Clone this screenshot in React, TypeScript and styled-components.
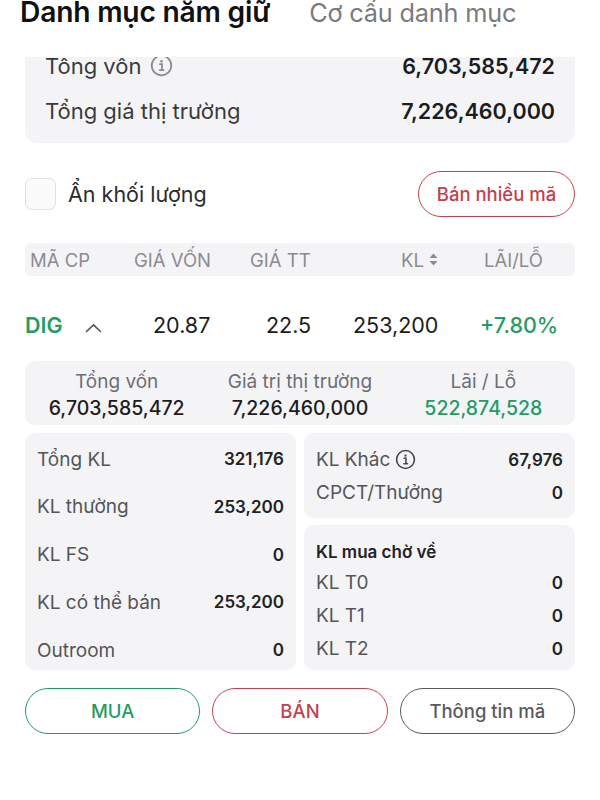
import React, { useLayoutEffect, useRef } from "react";
import styled, { createGlobalStyle } from "styled-components";

const GREEN = "#1f9d62";
const RED = "#c4404d";
const CARD = "#f4f4f7";
const DARK = "#1c1c1e";

const Global = createGlobalStyle`
  html, body { margin: 0; padding: 0; background: #fff; }
  body { font-family: Inter, "Noto Sans", "Liberation Sans", sans-serif; color: ${DARK}; }
  * { box-sizing: border-box; }
`;

const Page = styled.div`
  width: 600px;
  height: 800px;
  display: flex;
  flex-direction: column;
  overflow: hidden;
  background: #fff;
`;

const Header = styled.div`
  height: 57px;
  flex: none;
  display: flex;
  align-items: baseline;
  gap: 39px;
  padding: 0 20px;
  background: #fff;
`;

const Tab = styled.div<{ $active?: boolean }>`
  font-size: ${(p) => (p.$active ? "28.2px" : "25.3px")};
  line-height: 25px;
  font-weight: ${(p) => (p.$active ? 600 : 400)};
  color: ${(p) => (p.$active ? "#111" : "#7a7a7e")};
  letter-spacing: -0.2px;
`;

const Viewport = styled.div`
  flex: 1;
  overflow-y: auto;
  scrollbar-width: none;
  &::-webkit-scrollbar { display: none; }
`;

const Content = styled.div`
  padding: 0 25px 120px;
  display: flex;
  flex-direction: column;
`;

const SummaryCard = styled.div`
  background: ${CARD};
  border-radius: 12px;
  padding: 0 20px 10px;
`;

const SummaryRow = styled.div`
  height: 45px;
  display: flex;
  align-items: center;
  justify-content: space-between;
  font-size: 22px;
`;

const SummaryLabel = styled.span`
  display: flex;
  align-items: center;
  gap: 9px;
  color: #3a3a3c;
`;

const SummaryValue = styled.span`
  font-size: 21.5px;
  font-weight: 600;
  color: ${DARK};
`;

const ToolRow = styled.div`
  margin-top: 28px;
  height: 46px;
  display: flex;
  align-items: center;
  justify-content: space-between;
`;

const CheckLabel = styled.label`
  display: flex;
  align-items: center;
  gap: 12px;
  font-size: 21.5px;
  color: #2c2c2e;
`;

const CheckBox = styled.span`
  width: 31px;
  height: 32px;
  border: 1px solid #e0e0e4;
  border-radius: 7px;
  background: #fbfbfc;
`;

const OutlineButton = styled.button<{ $color: string; $size?: number }>`
  height: 46px;
  border-radius: 23px;
  border: 1.5px solid ${(p) => p.$color};
  background: #fff;
  color: ${(p) => p.$color};
  font-family: inherit;
  font-size: ${(p) => p.$size ?? 18.5}px;
  font-weight: 500;
  padding: 0 16px;
  cursor: pointer;
`;

const TableHeader = styled.div`
  margin-top: 26px;
  height: 33px;
  background: ${CARD};
  border-radius: 6px;
  display: grid;
  grid-template-columns: 104px 116px 151px 83px 1fr;
  align-items: center;
  padding-left: 5px;
  font-size: 18.5px;
  color: #8b8b90;
`;

const HeadCell = styled.span`
  display: flex;
  align-items: center;
  gap: 5px;
`;

const StockRow = styled.div`
  margin-top: 28px;
  height: 42px;
  display: grid;
  grid-template-columns: 60px 68px 113px 87px 127px 1fr;
  align-items: center;
  font-size: 21.5px;
  color: ${DARK};
`;

const Ticker = styled.span`
  color: ${GREEN};
  font-weight: 600;
`;

const Change = styled.span`
  color: ${GREEN};
  font-weight: 500;
`;

const TotalsCard = styled.div`
  margin-top: 15px;
  background: ${CARD};
  border-radius: 10px;
  padding: 10px 0 6px;
  display: grid;
  grid-template-columns: 1fr 1fr 1fr;
`;

const TotalCol = styled.div`
  display: flex;
  flex-direction: column;
  align-items: center;
  gap: 4px;
`;

const TotalLabel = styled.span`
  font-size: 19px;
  line-height: 22px;
  color: #6e6e73;
`;

const TotalValue = styled.span<{ $green?: boolean }>`
  font-size: 19.5px;
  line-height: 22px;
  font-weight: 500;
  color: ${(p) => (p.$green ? GREEN : DARK)};
`;

const DetailGrid = styled.div`
  margin-top: 8px;
  display: grid;
  grid-template-columns: 1fr 1fr;
  gap: 8px;
`;

const Column = styled.div`
  display: flex;
  flex-direction: column;
  gap: 7px;
`;

const DetailCard = styled.div<{ $pad: string; $spread?: boolean; $grow?: boolean }>`
  background: ${CARD};
  border-radius: 10px;
  padding: ${(p) => p.$pad};
  display: flex;
  flex-direction: column;
  justify-content: ${(p) => (p.$spread ? "space-between" : "flex-start")};
  min-height: ${(p) => (p.$spread ? "237px" : "0")};
  flex: ${(p) => (p.$grow ? 1 : "none")};
`;

const DetailRow = styled.div<{ $h: number }>`
  height: ${(p) => p.$h}px;
  display: flex;
  align-items: center;
  justify-content: space-between;
`;

const DetailLabel = styled.span`
  display: flex;
  align-items: center;
  gap: 5px;
  font-size: 19px;
  color: #555558;
`;

const DetailValue = styled.span`
  font-size: 17px;
  font-weight: 600;
  color: #222;
`;

const CardTitle = styled.div`
  font-size: 17px;
  line-height: 22px;
  font-weight: 600;
  color: #222;
  margin-bottom: 3px;
`;

const ActionRow = styled.div`
  margin-top: 18px;
  display: grid;
  grid-template-columns: 1fr 1fr 1fr;
  gap: 12px;
`;

const InfoIcon = ({ size, color }: { size: number; color: string }) => (
  <svg width={size} height={size} viewBox="0 0 24 24" fill="none">
    <circle cx="12" cy="12" r="10.2" stroke={color} strokeWidth="1.8" />
    <circle cx="12" cy="7.6" r="1.3" fill={color} />
    <path d="M10.4 10.6h2.1v6.2M10.2 16.8h4" stroke={color} strokeWidth="1.8" strokeLinecap="round" />
  </svg>
);

const ChevronUp = () => (
  <svg width="17" height="10" viewBox="0 0 17 10" fill="none">
    <path d="M1.5 8.5 8.5 1.8l7 6.7" stroke="#555" strokeWidth="1.6" strokeLinecap="round" strokeLinejoin="round" />
  </svg>
);

const SortIcon = () => (
  <svg width="9" height="13" viewBox="0 0 9 13">
    <path d="M4.5 0.5 8.5 5H0.5z" fill="#8b8b90" />
    <path d="M4.5 12.5 0.5 8h8z" fill="#8b8b90" />
  </svg>
);

const SCROLL_OFFSET = 14;

export default function App() {
  const viewRef = useRef<HTMLDivElement>(null);
  useLayoutEffect(() => {
    if (viewRef.current) viewRef.current.scrollTop = SCROLL_OFFSET;
  }, []);

  return (
    <Page>
      <Global />
      <Header>
        <Tab $active>Danh mục nắm giữ</Tab>
        <Tab>Cơ cấu danh mục</Tab>
      </Header>
      <Viewport ref={viewRef}>
        <Content>
          <SummaryCard>
            <SummaryRow>
              <SummaryLabel>
                Tổng vốn <InfoIcon size={23} color="#8a8a8e" />
              </SummaryLabel>
              <SummaryValue>6,703,585,472</SummaryValue>
            </SummaryRow>
            <SummaryRow>
              <SummaryLabel>Tổng giá thị trường</SummaryLabel>
              <SummaryValue>7,226,460,000</SummaryValue>
            </SummaryRow>
          </SummaryCard>

          <ToolRow>
            <CheckLabel>
              <CheckBox />
              Ẩn khối lượng
            </CheckLabel>
            <OutlineButton $color={RED} style={{ width: 157 }}>
              Bán nhiều mã
            </OutlineButton>
          </ToolRow>

          <TableHeader>
            <HeadCell>MÃ CP</HeadCell>
            <HeadCell>GIÁ VỐN</HeadCell>
            <HeadCell>GIÁ TT</HeadCell>
            <HeadCell>
              KL <SortIcon />
            </HeadCell>
            <HeadCell>LÃI/LỖ</HeadCell>
          </TableHeader>

          <StockRow>
            <Ticker>DIG</Ticker>
            <span>
              <ChevronUp />
            </span>
            <span>20.87</span>
            <span>22.5</span>
            <span>253,200</span>
            <Change>+7.80%</Change>
          </StockRow>

          <TotalsCard>
            <TotalCol>
              <TotalLabel>Tổng vốn</TotalLabel>
              <TotalValue>6,703,585,472</TotalValue>
            </TotalCol>
            <TotalCol>
              <TotalLabel>Giá trị thị trường</TotalLabel>
              <TotalValue>7,226,460,000</TotalValue>
            </TotalCol>
            <TotalCol>
              <TotalLabel>Lãi / Lỗ</TotalLabel>
              <TotalValue $green>522,874,528</TotalValue>
            </TotalCol>
          </TotalsCard>

          <DetailGrid>
            <DetailCard $pad="14px 12px 8px 12px" $spread>
              <DetailRow $h={24}>
                <DetailLabel>Tổng KL</DetailLabel>
                <DetailValue>321,176</DetailValue>
              </DetailRow>
              <DetailRow $h={24}>
                <DetailLabel>KL thường</DetailLabel>
                <DetailValue>253,200</DetailValue>
              </DetailRow>
              <DetailRow $h={24}>
                <DetailLabel>KL FS</DetailLabel>
                <DetailValue>0</DetailValue>
              </DetailRow>
              <DetailRow $h={24}>
                <DetailLabel>KL có thể bán</DetailLabel>
                <DetailValue>253,200</DetailValue>
              </DetailRow>
              <DetailRow $h={24}>
                <DetailLabel>Outroom</DetailLabel>
                <DetailValue>0</DetailValue>
              </DetailRow>
            </DetailCard>
            <Column>
              <DetailCard $pad="10px 12px 9px 12px">
                <DetailRow $h={33}>
                  <DetailLabel>
                    KL Khác <InfoIcon size={21} color="#444" />
                  </DetailLabel>
                  <DetailValue>67,976</DetailValue>
                </DetailRow>
                <DetailRow $h={33}>
                  <DetailLabel>CPCT/Thưởng</DetailLabel>
                  <DetailValue>0</DetailValue>
                </DetailRow>
              </DetailCard>
              <DetailCard $pad="16px 12px 0 12px" $grow>
                <CardTitle>KL mua chờ về</CardTitle>
                <DetailRow $h={33}>
                  <DetailLabel>KL T0</DetailLabel>
                  <DetailValue>0</DetailValue>
                </DetailRow>
                <DetailRow $h={33}>
                  <DetailLabel>KL T1</DetailLabel>
                  <DetailValue>0</DetailValue>
                </DetailRow>
                <DetailRow $h={33}>
                  <DetailLabel>KL T2</DetailLabel>
                  <DetailValue>0</DetailValue>
                </DetailRow>
              </DetailCard>
            </Column>
          </DetailGrid>

          <ActionRow>
            <OutlineButton $color={GREEN}>MUA</OutlineButton>
            <OutlineButton $color={RED}>BÁN</OutlineButton>
            <OutlineButton $color="#5a5a5e">Thông tin mã</OutlineButton>
          </ActionRow>
        </Content>
      </Viewport>
    </Page>
  );
}
